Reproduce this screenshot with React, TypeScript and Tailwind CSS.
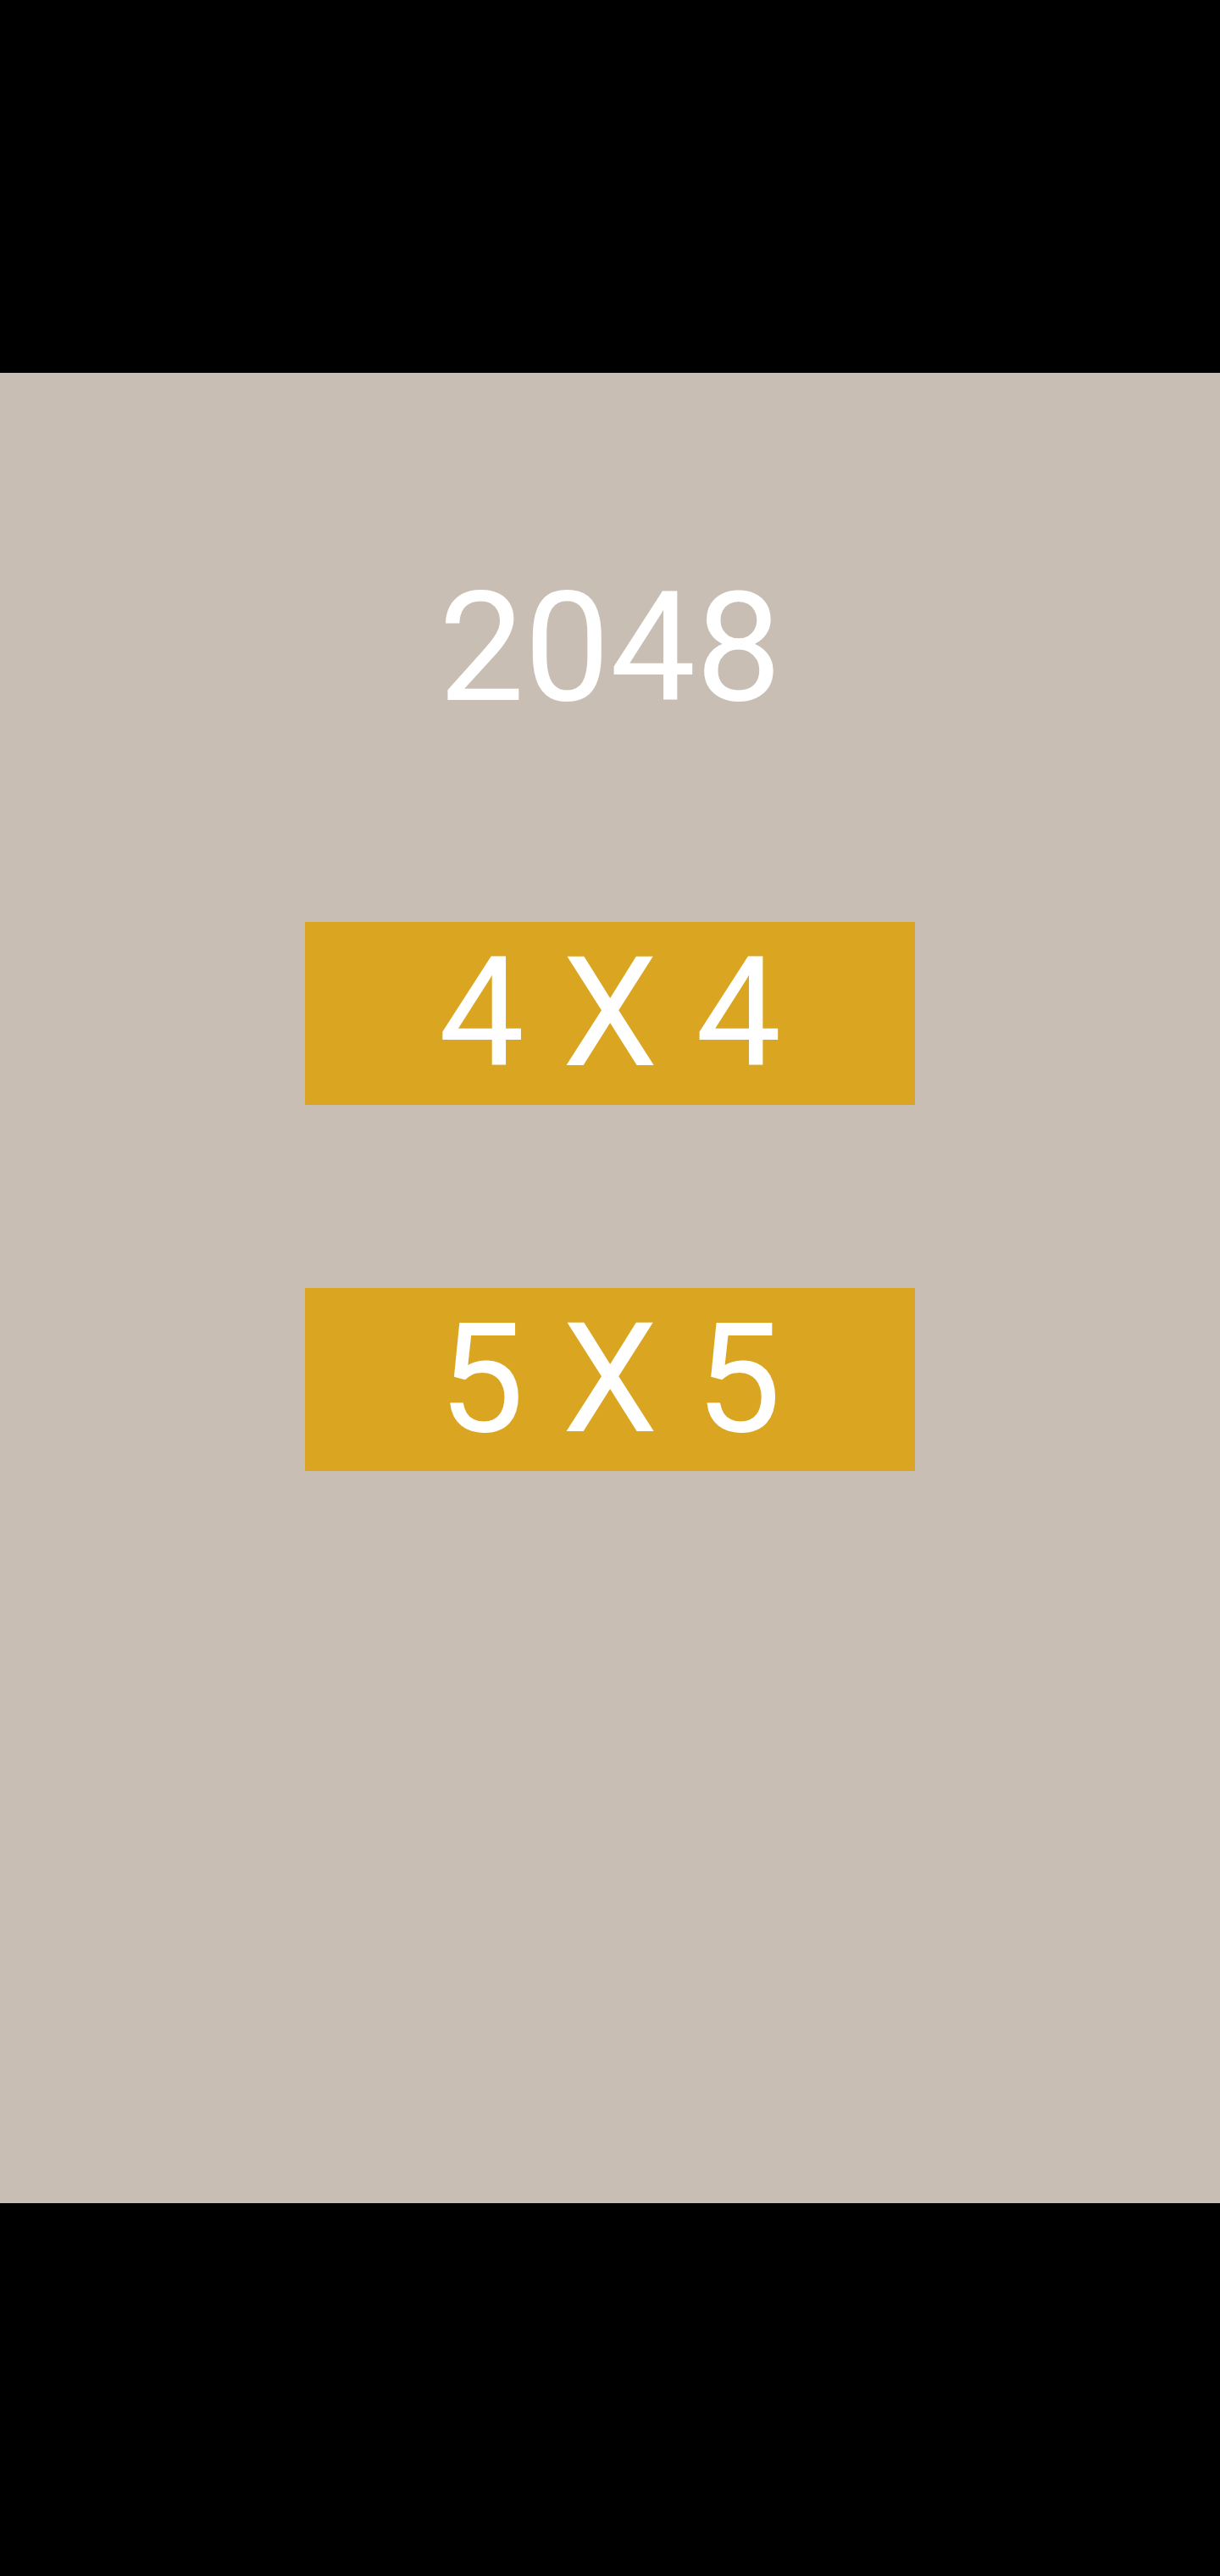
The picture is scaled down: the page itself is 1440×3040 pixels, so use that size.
export default function App() {
    const sizes = ['4 X 4', '5 X 5']

    return (
        <div className="w-[1440px] h-[3040px] bg-black flex flex-col" style={{ fontFamily: 'Roboto, "Liberation Sans", sans-serif' }}>
            <div className="h-[440px] bg-black" />

            <main className="h-[2160px] bg-[#c8beb4] flex flex-col items-center">
                <h1 className="mt-[235px] text-[180px] leading-none text-white font-normal">2048</h1>

                <div className="mt-[233px] flex flex-col gap-[216px]">
                    {sizes.map((s) => (
                        <button key={s} className="w-[720px] h-[216px] bg-[#daa520] text-white text-[180px] leading-none flex items-center justify-center">
                            {s}
                        </button>
                    ))}
                </div>
            </main>

            <div className="h-[440px] bg-black" />
        </div>
    )
}
